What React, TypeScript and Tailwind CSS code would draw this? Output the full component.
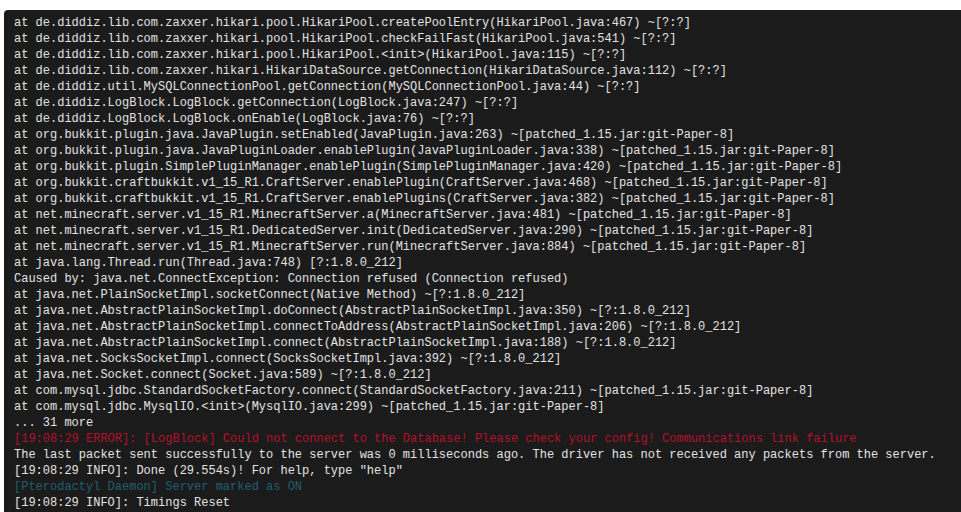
import React from "react";

type Line = { t: string; c?: "err" | "daemon" };

const lines: Line[] = [
  { t: "at de.diddiz.lib.com.zaxxer.hikari.pool.HikariPool.createPoolEntry(HikariPool.java:467) ~[?:?]" },
  { t: "at de.diddiz.lib.com.zaxxer.hikari.pool.HikariPool.checkFailFast(HikariPool.java:541) ~[?:?]" },
  { t: "at de.diddiz.lib.com.zaxxer.hikari.pool.HikariPool.<init>(HikariPool.java:115) ~[?:?]" },
  { t: "at de.diddiz.lib.com.zaxxer.hikari.HikariDataSource.getConnection(HikariDataSource.java:112) ~[?:?]" },
  { t: "at de.diddiz.util.MySQLConnectionPool.getConnection(MySQLConnectionPool.java:44) ~[?:?]" },
  { t: "at de.diddiz.LogBlock.LogBlock.getConnection(LogBlock.java:247) ~[?:?]" },
  { t: "at de.diddiz.LogBlock.LogBlock.onEnable(LogBlock.java:76) ~[?:?]" },
  { t: "at org.bukkit.plugin.java.JavaPlugin.setEnabled(JavaPlugin.java:263) ~[patched_1.15.jar:git-Paper-8]" },
  { t: "at org.bukkit.plugin.java.JavaPluginLoader.enablePlugin(JavaPluginLoader.java:338) ~[patched_1.15.jar:git-Paper-8]" },
  { t: "at org.bukkit.plugin.SimplePluginManager.enablePlugin(SimplePluginManager.java:420) ~[patched_1.15.jar:git-Paper-8]" },
  { t: "at org.bukkit.craftbukkit.v1_15_R1.CraftServer.enablePlugin(CraftServer.java:468) ~[patched_1.15.jar:git-Paper-8]" },
  { t: "at org.bukkit.craftbukkit.v1_15_R1.CraftServer.enablePlugins(CraftServer.java:382) ~[patched_1.15.jar:git-Paper-8]" },
  { t: "at net.minecraft.server.v1_15_R1.MinecraftServer.a(MinecraftServer.java:481) ~[patched_1.15.jar:git-Paper-8]" },
  { t: "at net.minecraft.server.v1_15_R1.DedicatedServer.init(DedicatedServer.java:290) ~[patched_1.15.jar:git-Paper-8]" },
  { t: "at net.minecraft.server.v1_15_R1.MinecraftServer.run(MinecraftServer.java:884) ~[patched_1.15.jar:git-Paper-8]" },
  { t: "at java.lang.Thread.run(Thread.java:748) [?:1.8.0_212]" },
  { t: "Caused by: java.net.ConnectException: Connection refused (Connection refused)" },
  { t: "at java.net.PlainSocketImpl.socketConnect(Native Method) ~[?:1.8.0_212]" },
  { t: "at java.net.AbstractPlainSocketImpl.doConnect(AbstractPlainSocketImpl.java:350) ~[?:1.8.0_212]" },
  { t: "at java.net.AbstractPlainSocketImpl.connectToAddress(AbstractPlainSocketImpl.java:206) ~[?:1.8.0_212]" },
  { t: "at java.net.AbstractPlainSocketImpl.connect(AbstractPlainSocketImpl.java:188) ~[?:1.8.0_212]" },
  { t: "at java.net.SocksSocketImpl.connect(SocksSocketImpl.java:392) ~[?:1.8.0_212]" },
  { t: "at java.net.Socket.connect(Socket.java:589) ~[?:1.8.0_212]" },
  { t: "at com.mysql.jdbc.StandardSocketFactory.connect(StandardSocketFactory.java:211) ~[patched_1.15.jar:git-Paper-8]" },
  { t: "at com.mysql.jdbc.MysqlIO.<init>(MysqlIO.java:299) ~[patched_1.15.jar:git-Paper-8]" },
  { t: "... 31 more" },
  { t: "[19:08:29 ERROR]: [LogBlock] Could not connect to the Database! Please check your config! Communications link failure", c: "err" },
  { t: "The last packet sent successfully to the server was 0 milliseconds ago. The driver has not received any packets from the server." },
  { t: "[19:08:29 INFO]: Done (29.554s)! For help, type \"help\"" },
  { t: "[Pterodactyl Daemon] Server marked as ON", c: "daemon" },
  { t: "[19:08:29 INFO]: Timings Reset" },
];

export default function App() {
  return (
    <div className="w-[961px] h-[512px] bg-white overflow-hidden pt-[10px] pl-[4px]">
      <div
        className="h-[502px] bg-[#1b1b1b] rounded-tl-[4px] pl-[10px] pt-[5px] overflow-hidden text-[12px] leading-[16px] text-[#e3e3e3] whitespace-pre"
        style={{ fontFamily: '"Liberation Mono", "DejaVu Sans Mono", monospace' }}
      >
        {lines.map((l, i) => (
          <div
            key={i}
            className={
              l.c === "err"
                ? "text-[#b5102c]"
                : l.c === "daemon"
                ? "text-[#1f5f6f]"
                : ""
            }
          >
            {l.t}
          </div>
        ))}
      </div>
    </div>
  );
}
